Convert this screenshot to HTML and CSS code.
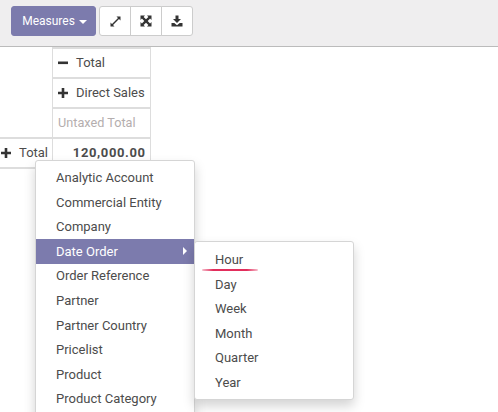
FILE: index.html
```html
<!DOCTYPE html>
<html>
<head>
<meta charset="utf-8">
<link rel="stylesheet" href="styles.css">
<title>Pivot</title>
</head>
<body>
<header class="panel">
  <button class="btn primary">Measures <span class="caret"></span></button>
  <div class="group">
    <button class="btn icon"><svg width="11" height="11" viewBox="0 0 11 11"><path d="M6.500 0.500H10.500V4.500L9 3 3 9 4.500 10.500H0.500V6.500L2 8 8 2z" fill="#333"/></svg></button>
    <button class="btn icon"><svg width="12" height="12" viewBox="0 0 12 12"><path d="M0.500 0.500H5L3.600 1.900 6 4.300 8.400 1.900 7 0.500h4.500V5L10.100 3.600 7.700 6l2.400 2.400L11.500 7v4.500H7l1.400-1.400L6 7.700 3.600 10.100 5 11.500H0.500V7l1.400 1.400L4.300 6 1.900 3.600 0.500 5z" fill="#333"/></svg></button>
    <button class="btn icon"><svg width="12" height="12" viewBox="0 0 12 12"><path d="M4.500 0.500h3V4h2.500L6 8 2 4h2.500z" fill="#333"/><path d="M0.500 8h2.800L6 10.200 8.700 8h2.800v3.500H0.500z" fill="#333"/></svg></button>
  </div>
</header>
<table class="pivot">
  <tr>
    <td class="blank" rowspan="3"></td>
    <td class="head"><svg class="sign" width="10" height="10" viewBox="0 0 10 10"><path d="M0 3.500h10v2.600H0z" fill="#333"/></svg>Total</td>
  </tr>
  <tr>
    <td class="head"><svg class="sign" width="10" height="10" viewBox="0 0 10 10"><path d="M3.700 0h2.600v3.700H10v2.600H6.300V10H3.700V6.300H0V3.700h3.700z" fill="#333"/></svg>Direct Sales</td>
  </tr>
  <tr><td class="measure">Untaxed Total</td></tr>
  <tr>
    <td class="rowhead"><svg class="sign" width="10" height="10" viewBox="0 0 10 10"><path d="M3.700 0h2.600v3.700H10v2.600H6.300V10H3.700V6.300H0V3.700h3.700z" fill="#333"/></svg>Total</td>
    <td class="value">120,000.00</td>
  </tr>
</table>
<ul class="menu main-menu">
  <li>Analytic Account</li>
  <li>Commercial Entity</li>
  <li>Company</li>
  <li class="active">Date Order<span class="arrow"></span></li>
  <li>Order Reference</li>
  <li>Partner</li>
  <li>Partner Country</li>
  <li>Pricelist</li>
  <li>Product</li>
  <li>Product Category</li>
</ul>
<ul class="menu sub-menu">
  <li>Hour</li>
  <li>Day</li>
  <li>Week</li>
  <li>Month</li>
  <li>Quarter</li>
  <li>Year</li>
</ul>
<div class="underline"></div>
</body>
</html>
```

FILE: styles.css
```css
html, body {
  margin: 0;
  height: 100%;
  overflow: hidden;
  background: #fff;
  font-family: Roboto, sans-serif;
  font-size: 13px;
  line-height: 18.6px;
  color: #4c4c4c;
}
.panel {
  display: flex;
  align-items: flex-start;
  gap: 3px;
  box-sizing: border-box;
  height: 47px;
  padding: 6px 0 0 11px;
  background: #efeeef;
  border-bottom: 1px solid #bbb;
}
.btn {
  font: inherit;
  height: 30px;
  border-radius: 3px;
  border: 1px solid #ccc;
  background: #fff;
  color: #333;
  padding: 0;
}
.primary {
  width: 85px;
  padding-left: 2px;
  font-size: 12px;
  background: #7c7bad;
  border-color: #7c7bad;
  color: #fff;
}
.caret {
  display: inline-block;
  vertical-align: middle;
  margin-left: 1px;
  border-top: 4px solid #fff;
  border-left: 4px solid transparent;
  border-right: 4px solid transparent;
}
.group {
  display: flex;
}
.icon {
  display: flex;
  align-items: center;
  justify-content: center;
  width: 32px;
  margin-left: -1px;
  border-radius: 0;
}
.group .icon:first-child {
  margin-left: 0;
  border-radius: 3px 0 0 3px;
}
.group .icon:last-child {
  border-radius: 0 3px 3px 0;
}
.pivot {
  border-collapse: collapse;
  table-layout: fixed;
  width: 150px;
}
.pivot td {
  box-sizing: border-box;
  height: 30px;
  padding: 0;
  border: 2px solid #ddd;
  border-width: 2px 1px;
  white-space: nowrap;
  color: #4c4c4c;
}
.pivot .blank {
  width: 52px;
  border-top: 0;
  border-left: 0;
}
.pivot .head {
  width: 98px;
  padding-left: 5.5px;
  border-right: 1px solid #ddd;
}
.pivot .measure {
  padding: 1px 0 0 5.5px;
  color: #b4aeae;
  font-size: 12.7px;
}
.pivot .rowhead {
  border-left: 0;
  padding: 1px 0 0 1px;
  color: #4c4c4c;
}
.pivot .value {
  text-align: right;
  padding: 1px 4px 0 0;
  font-weight: 700;
  letter-spacing: 0.6px;
}
.sign {
  vertical-align: -1px;
  margin-right: 8px;
}
.menu {
  position: absolute;
  box-sizing: border-box;
  width: 160px;
  margin: 0;
  padding: 5px 0;
  list-style: none;
  background: #fff;
  border: 1px solid #d5d5d5;
  border-radius: 3px;
  box-shadow: 0 6px 12px rgba(0, 0, 0, 0.175);
}
.menu li {
  position: relative;
  padding: 3px 20px;
  color: #4c4c4c;
  white-space: nowrap;
}
.menu .active {
  margin-top: -0.5px;
  padding-top: 3.5px;
  background: #7c7bad;
  color: #fff;
}
.main-menu {
  left: 35px;
  top: 160px;
  padding-bottom: 40px;
}
.sub-menu {
  left: 194px;
  top: 241px;
  padding: 6px 0 3.9px;
}
.arrow {
  position: absolute;
  right: 7px;
  top: 8px;
  border-left: 4px solid #fff;
  border-top: 4px solid transparent;
  border-bottom: 4px solid transparent;
}
.underline {
  position: absolute;
  left: 202px;
  top: 269px;
  width: 56px;
  height: 2px;
  border-radius: 1px;
  background: linear-gradient(90deg, rgba(226, 46, 92, 0.3), #e22e5c 20%, #e22e5c 80%, rgba(226, 46, 92, 0.3));
}
```
